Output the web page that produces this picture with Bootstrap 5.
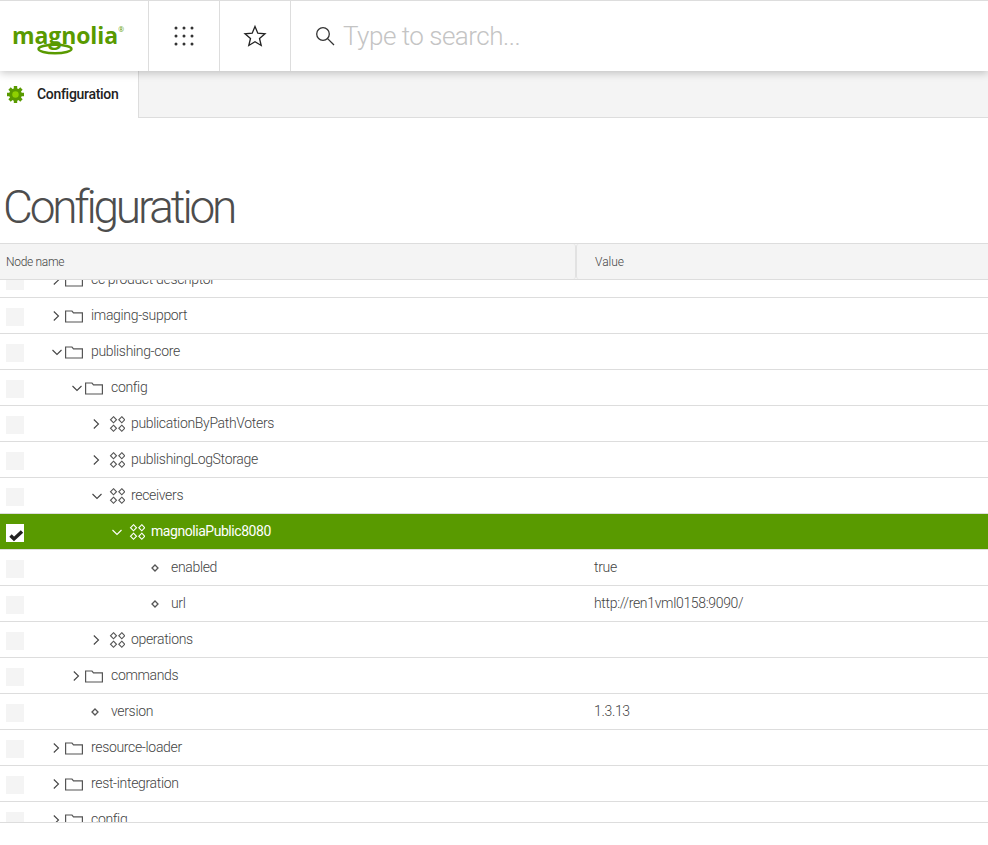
<!DOCTYPE html>
<html lang="en">
<head>
    <meta charset="UTF-8">
    <meta name="viewport" content="width=device-width, initial-scale=1.0">
    <title>Configuration</title>
    <link href="https://cdn.jsdelivr.net/npm/bootstrap@5.3.0/dist/css/bootstrap.min.css" rel="stylesheet">
    <style>
        body { font-family: Roboto, sans-serif; color: #4a4a4a; background: #fff; overflow: hidden; }

        /* Top bar */
        .top-bar { height: 71px; border-top: 1px solid #ddd; box-shadow: 0 2px 8px rgba(0,0,0,.22); position: relative; z-index: 2; background: #fff; }
        .logo-cell { width: 149px; flex: none; border-right: 1px solid #ddd; padding-left: 12px; padding-top: 21px; }
        .logo-text { font-family: "Open Sans", sans-serif; font-weight: 700; font-size: 23px; line-height: 26px; color: #599a00; letter-spacing: -.1px; position: relative; display: inline-block; }
        .logo-reg { font-size: 7px; position: absolute; right: -6px; top: 4px; font-weight: 400; letter-spacing: 0; line-height: 8px; }
        .logo-swoosh { position: absolute; left: 25px; top: 21px; }
        .icon-cell { width: 71px; flex: none; border-right: 1px solid #ddd; }
        .search-cell { padding-left: 24px; gap: 8px; }
        .search-text { font-size: 26px; font-weight: 300; color: #c4c4c4; line-height: 1; letter-spacing: -.5px; }

        /* Tab strip */
        .tab-strip { height: 47px; background: #f4f4f4; border-bottom: 1px solid #ddd; }
        .tab-active { width: 139px; height: 47px; background: #fff; border-right: 1px solid #ddd; padding: 0 0 1px 7px; gap: 13px; font-size: 14px; font-weight: 500; color: #222; letter-spacing: -.3px; }

        .page-title { font-size: 46px; font-weight: 300; color: #4d4d4d; margin: 0; padding: 62px 0 0 3px; height: 125px; line-height: 54px; letter-spacing: -3.2px; }

        /* Tree grid */
        .grid-head { height: 37px; background: #f4f4f4; border-top: 1px solid #ddd; border-bottom: 1px solid #ddd; font-size: 12px; font-weight: 300; color: #444; }
        .head-name { width: 576px; flex: none; padding-left: 6px; border-right: 1px solid #e2e2e2; border-radius: 0 3px 3px 0; letter-spacing: -.3px; }
        .head-value { padding-left: 18px; border-left: 1px solid #e2e2e2; border-radius: 3px 0 0 3px; }
        .grid-body { height: 543px; overflow: hidden; border-bottom: 1px solid #ddd; position: relative; }
        .grid-scroll { margin-top: -18px; }
        .tree-row { height: 36px; border-bottom: 1px solid #ddd; font-size: 14px; font-weight: 300; color: #444; letter-spacing: -.33px; }
        .tree-row.picked { background: #599a00; background-clip: padding-box; color: #fff; font-weight: 400; letter-spacing: -.45px; }
        .tick-box { width: 18px; height: 18px; background: #f4f4f4; margin: 2px 0 0 6px; flex: none; }
        .picked .tick-box { background: #fff; }
        .name-cell { width: 570px; flex: none; padding-left: var(--indent); }
        .tree-arrow { width: 16px; flex: none; }
        .tree-icon { width: 20px; flex: none; margin-right: 6px; color: #555; }
        .picked .tree-icon { color: #fff; }
    </style>
</head>
<body>
    <svg width="0" height="0" class="d-block">
        <defs>
            <symbol id="arrow-right" viewBox="0 0 16 16"><path d="M4.8 3.5 9.5 8 4.8 12.5" fill="none" stroke="currentColor" stroke-width="1.1"/></symbol>
            <symbol id="arrow-down" viewBox="0 0 16 16"><path d="M3.5 6 8 10.5 12.5 6" fill="none" stroke="currentColor" stroke-width="1.1"/></symbol>
            <symbol id="folder" viewBox="0 0 20 16"><path d="M.6 3H7L8.5 4.8H17.4V14H.6Z" fill="none" stroke="currentColor" stroke-width="1.2"/></symbol>
            <symbol id="content-node" viewBox="0 0 20 20">
                <g fill="none" stroke="currentColor" stroke-width="1.1">
                    <path d="M8.5 2.7 11.5 5.75 8.5 8.8 5.5 5.75Z"/><path d="M16.8 2.7 19.8 5.75 16.8 8.8 13.8 5.75Z"/>
                    <path d="M8.5 11.2 11.5 14.25 8.5 17.3 5.5 14.25Z"/><path d="M16.8 11.2 19.8 14.25 16.8 17.3 13.8 14.25Z"/>
                </g>
            </symbol>
            <symbol id="prop-node" viewBox="0 0 20 16"><path d="M10 5 13 8 10 11 7 8Z" fill="none" stroke="currentColor" stroke-width="1.3"/></symbol>
        </defs>
    </svg>

    <div class="top-bar d-flex">
        <div class="logo-cell">
            <span class="logo-text">magnolia<span class="logo-reg">®</span>
                <svg class="logo-swoosh" width="36" height="12" viewBox="0 0 36 12"><ellipse cx="18" cy="6" rx="16.5" ry="4.2" fill="none" stroke="#599a00" stroke-width="2.4"/></svg>
            </span>
        </div>
        <div class="icon-cell d-flex align-items-center justify-content-center">
            <svg width="22" height="22" viewBox="0 0 22 22" fill="#333"><circle cx="3" cy="3" r="1.5"/><circle cx="11" cy="3" r="1.5"/><circle cx="19" cy="3" r="1.5"/><circle cx="3" cy="11" r="1.5"/><circle cx="11" cy="11" r="1.5"/><circle cx="19" cy="11" r="1.5"/><circle cx="3" cy="19" r="1.5"/><circle cx="11" cy="19" r="1.5"/><circle cx="19" cy="19" r="1.5"/></svg>
        </div>
        <div class="icon-cell d-flex align-items-center justify-content-center">
            <svg width="24" height="24" viewBox="0 0 24 24"><path d="M12 2.5 14.8 9.2 22 9.8 16.5 14.5 18.2 21.5 12 17.8 5.8 21.5 7.5 14.5 2 9.8 9.2 9.2Z" fill="none" stroke="#222" stroke-width="1.3"/></svg>
        </div>
        <div class="search-cell d-flex align-items-center flex-grow-1">
            <svg width="20" height="20" viewBox="0 0 20 20"><circle cx="8" cy="8" r="6.3" fill="none" stroke="#333" stroke-width="1.3"/><path d="M12.6 12.6 19 19" stroke="#333" stroke-width="1.3"/></svg>
            <span class="search-text">Type to search...</span>
        </div>
    </div>

    <div class="tab-strip">
        <div class="tab-active d-flex align-items-center">
            <svg width="17" height="17" viewBox="0 0 20 20"><g stroke="#599a00" stroke-width="4"><path d="M10 0v5M10 15v5M0 10h5M15 10h5M3 3l3.5 3.5M13.5 13.5 17 17M3 17l3.5-3.5M13.5 6.5 17 3"/></g><circle cx="10" cy="10" r="7.5" fill="#599a00"/><circle cx="10" cy="10" r="3.8" fill="#8ed100"/></svg>
            <span>Configuration</span>
        </div>
    </div>

    <h1 class="page-title">Configuration</h1>

    <div class="grid-head d-flex align-items-center">
        <div class="head-name h-100 d-flex align-items-center">Node name</div>
        <div class="head-value h-100 d-flex align-items-center flex-grow-1">Value</div>
    </div>

    <div class="grid-body">
        <div class="grid-scroll" id="rows"></div>
    </div>

    <script>
        // indent in px, kind: r closed, d open, n leaf; icon: folder, content-node, prop-node
        const nodes = [
            [50, 'r', 'folder', 'cc product descriptor', ''],
            [50, 'r', 'folder', 'imaging-support', ''],
            [50, 'd', 'folder', 'publishing-core', ''],
            [70, 'd', 'folder', 'config', ''],
            [90, 'r', 'content-node', 'publicationByPathVoters', ''],
            [90, 'r', 'content-node', 'publishingLogStorage', ''],
            [90, 'd', 'content-node', 'receivers', ''],
            [110, 'd', 'content-node', 'magnoliaPublic8080', '', true],
            [130, 'n', 'prop-node', 'enabled', 'true'],
            [130, 'n', 'prop-node', 'url', 'http://ren1vml0158:9090/'],
            [90, 'r', 'content-node', 'operations', ''],
            [70, 'r', 'folder', 'commands', ''],
            [70, 'n', 'prop-node', 'version', '1.3.13'],
            [50, 'r', 'folder', 'resource-loader', ''],
            [50, 'r', 'folder', 'rest-integration', ''],
            [50, 'r', 'folder', 'config', '']
        ];
        const tick = '<svg class="d-block" width="18" height="18" viewBox="0 0 18 18"><path d="M4.5 11.5 8 15 16 7.5" fill="none" stroke="#222" stroke-width="3.4"/></svg>';

        document.getElementById('rows').innerHTML = nodes.map(function(n) {
            const arrow = n[1] === 'n' ? '' : '<svg width="16" height="16"><use href="#arrow-' + (n[1] === 'r' ? 'right' : 'down') + '"/></svg>';
            const h = n[2] === 'content-node' ? 20 : 16;
            return '<div class="tree-row d-flex align-items-center' + (n[5] ? ' picked' : '') + '">' +
                '<div class="tick-box">' + (n[5] ? tick : '') + '</div>' +
                '<div class="name-cell d-flex align-items-center" style="--indent:' + (n[0] - 25) + 'px">' +
                '<span class="tree-arrow d-flex">' + arrow + '</span>' +
                '<svg class="tree-icon" width="20" height="' + h + '"><use href="#' + n[2] + '"/></svg>' +
                '<span>' + n[3] + '</span></div>' +
                '<div>' + n[4] + '</div></div>';
        }).join('');
    </script>
    <script src="https://cdn.jsdelivr.net/npm/bootstrap@5.3.0/dist/js/bootstrap.bundle.min.js"></script>
</body>
</html>
